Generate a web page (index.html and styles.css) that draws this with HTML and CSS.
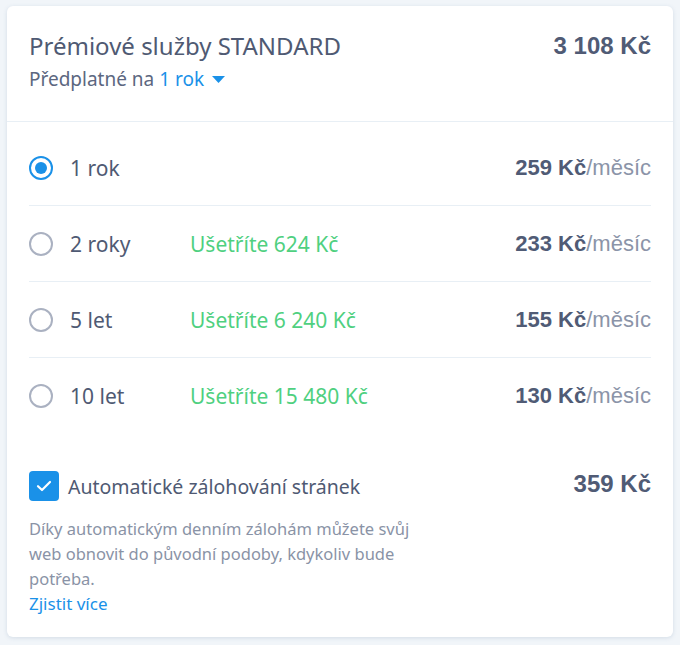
FILE: index.html
```html
<!DOCTYPE html>
<html lang="cs">
<head>
<meta charset="utf-8">
<link rel="stylesheet" href="styles.css">
</head>
<body>
<div class="card">
  <div class="head">
    <div class="head-text">
      <div class="title">Prémiové služby STANDARD</div>
      <div class="sub">Předplatné na <span class="link">1 rok <svg class="caret" width="13" height="7" viewBox="0 0 13 7"><path d="M0 0h13L6.5 7z" fill="#1a91e8"/></svg></span></div>
    </div>
    <div class="total">3 108 Kč</div>
  </div>
  <div class="options">
    <div class="row">
      <span class="radio on"></span>
      <span class="label">1 rok</span>
      <span class="save"></span>
      <span class="price"><b>259 Kč</b>/měsíc</span>
    </div>
    <div class="row">
      <span class="radio"></span>
      <span class="label">2 roky</span>
      <span class="save">Ušetříte 624 Kč</span>
      <span class="price"><b>233 Kč</b>/měsíc</span>
    </div>
    <div class="row">
      <span class="radio"></span>
      <span class="label">5 let</span>
      <span class="save">Ušetříte 6 240 Kč</span>
      <span class="price"><b>155 Kč</b>/měsíc</span>
    </div>
    <div class="row">
      <span class="radio"></span>
      <span class="label">10 let</span>
      <span class="save">Ušetříte 15 480 Kč</span>
      <span class="price"><b>130 Kč</b>/měsíc</span>
    </div>
  </div>
  <div class="backup">
    <div class="backup-top">
      <div class="check-line">
        <span class="checkbox"><svg width="16" height="12" viewBox="0 0 16 12"><path d="M2 6.2l4 3.8 8-8" fill="none" stroke="#fff" stroke-width="2.2" stroke-linecap="round" stroke-linejoin="round"/></svg></span>
        <span class="check-label">Automatické zálohování stránek</span>
      </div>
      <div class="backup-price">359 Kč</div>
    </div>
    <p class="desc">Díky automatickým denním zálohám můžete svůj web obnovit do původní podoby, kdykoliv bude potřeba.</p>
    <a class="more" href="#">Zjistit více</a>
  </div>
</div>
</body>
</html>
```
FILE: styles.css
```css
html, body {
  margin: 0;
  padding: 0;
}
body {
  background: #f1f5f9;
  font-family: "Noto Sans", "Open Sans", sans-serif;
  color: #4f5a73;
  width: 680px;
  height: 645px;
  overflow: hidden;
}
.card {
  margin: 6px 0 0 7px;
  width: 666px;
  height: 631px;
  box-sizing: border-box;
  background: #fff;
  border-radius: 6px;
  box-shadow: 0 1px 4px rgba(80, 110, 150, 0.18);
}
.head {
  display: flex;
  justify-content: space-between;
  align-items: flex-start;
  padding: 24px 22px 0 22px;
  height: 116px;
  box-sizing: border-box;
  border-bottom: 1px solid #e8eff5;
}
.title {
  font-size: 24px;
  line-height: 32px;
  color: #4f5a73;
}
.sub {
  font-size: 19px;
  line-height: 26px;
  margin-top: 4px;
  color: #5c6780;
}
.link {
  color: #1a91e8;
}
.caret {
  vertical-align: middle;
  margin-left: 3px;
  position: relative;
  top: -1px;
}
.total {
  font-family: "Liberation Sans", Arial, sans-serif;
  font-weight: bold;
  font-size: 24px;
  line-height: 32px;
  color: #505b75;
}
.options {
  padding: 8px 22px 0 22px;
}
.row {
  display: flex;
  align-items: center;
  height: 76px;
  box-sizing: border-box;
  border-bottom: 1px solid #e8eff5;
}
.row:last-child {
  border-bottom: none;
  height: 75px;
}
.radio {
  width: 24px;
  height: 24px;
  box-sizing: border-box;
  border-radius: 50%;
  border: 2px solid #aab1c1;
  flex: none;
  position: relative;
}
.radio.on {
  border-color: #1a91e8;
}
.radio.on::after {
  content: "";
  position: absolute;
  left: 4px;
  top: 4px;
  width: 12px;
  height: 12px;
  border-radius: 50%;
  background: #1a91e8;
}
.label {
  margin-left: 17px;
  width: 120px;
  font-size: 21px;
  color: #4f5a73;
}
.save {
  flex: 1;
  font-size: 21px;
  color: #4fd07f;
}
.price {
  font-family: "Liberation Sans", Arial, sans-serif;
  font-size: 22px;
  color: #8b94a8;
}
.price b {
  color: #505b75;
}
.backup {
  padding: 38px 22px 0 22px;
}
.backup-top {
  display: flex;
  justify-content: space-between;
  align-items: flex-start;
}
.check-line {
  display: flex;
  align-items: center;
}
.checkbox {
  width: 30px;
  height: 30px;
  border-radius: 4px;
  background: #1a91e8;
  display: flex;
  align-items: center;
  justify-content: center;
}
.check-label {
  margin-left: 9px;
  font-size: 19.5px;
  color: #4f5a73;
}
.backup-price {
  font-family: "Liberation Sans", Arial, sans-serif;
  font-weight: bold;
  font-size: 24px;
  line-height: 26px;
  color: #505b75;
}
.desc {
  margin: 15px 0 0 0;
  width: 400px;
  font-size: 16.5px;
  line-height: 25px;
  color: #8a93a6;
}
.more {
  display: block;
  font-size: 17px;
  line-height: 25px;
  color: #1a91e8;
  text-decoration: none;
}
```
